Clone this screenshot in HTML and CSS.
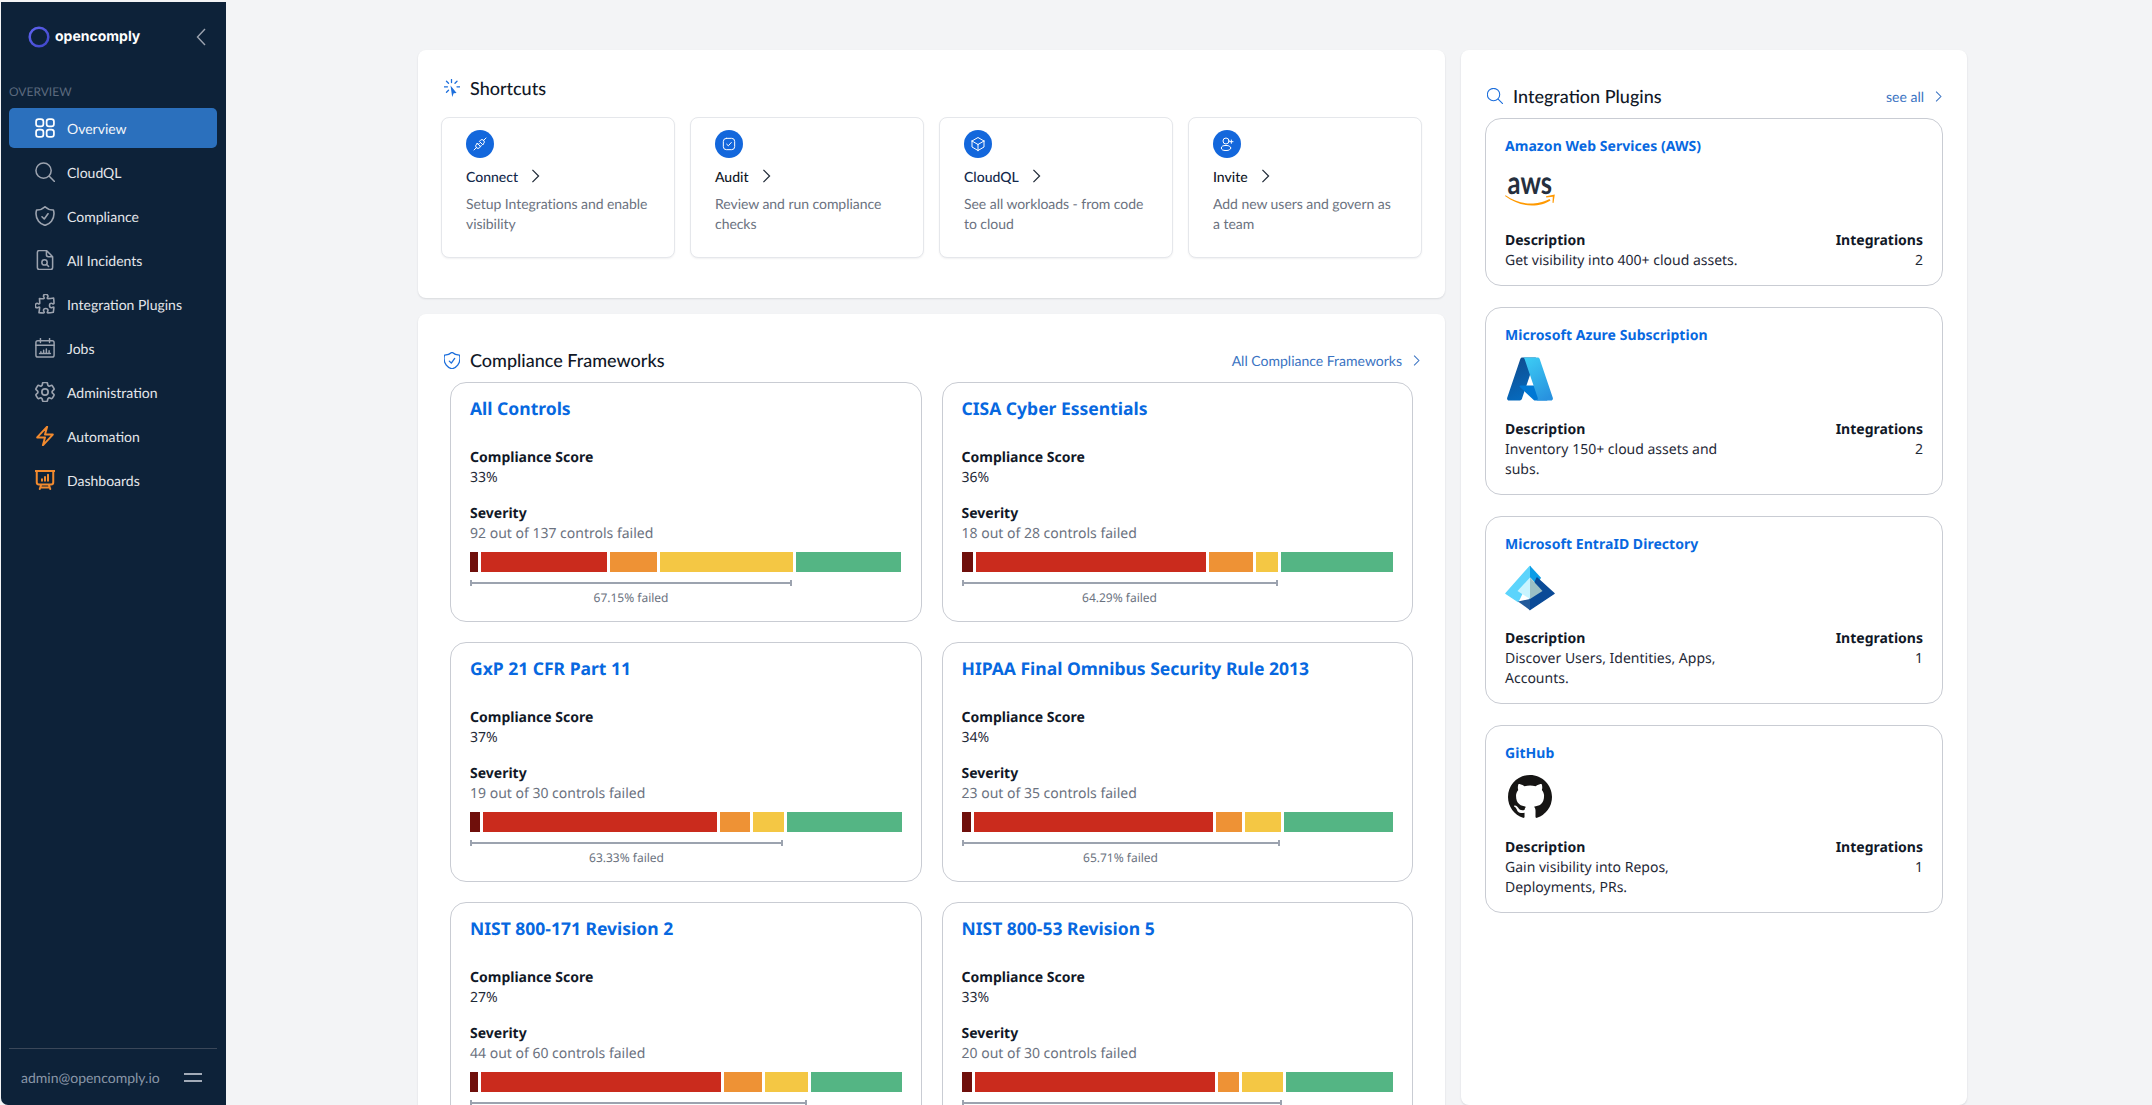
FILE: index.html
```html
<!DOCTYPE html>
<html lang="en">
<head>
<meta charset="utf-8">
<title>OpenComply Overview</title>
<link rel="stylesheet" href="styles.css">
</head>
<body>
<div class="app">
  <aside class="sidebar">
    <div class="brand">
      <svg class="brand-ring" viewBox="0 0 22 22"><defs><linearGradient id="ring" x1="0" y1="0" x2="1" y2="1"><stop offset="0" stop-color="#5f63f0"/><stop offset="1" stop-color="#3f46c8"/></linearGradient></defs><circle cx="11" cy="11" r="9.300" fill="none" stroke="url(#ring)" stroke-width="2.500"/></svg>
      <span class="brand-name">opencomply</span>
      <svg class="brand-toggle" viewBox="0 0 10 18"><path d="M9 1 1.500 9 9 17" fill="none" stroke="#9ca3af" stroke-width="1.400"/></svg>
    </div>
    <div class="nav-label">OVERVIEW</div>
    <nav class="nav">
      <a class="nav-item active"><svg class="nav-icon" viewBox="2.750 2.750 18.500 18.500"><path d="M3.750 6A2.250 2.250 0 016 3.750h2.250A2.250 2.250 0 0110.500 6v2.250a2.250 2.250 0 01-2.250 2.250H6a2.250 2.250 0 01-2.250-2.250V6zM3.750 15.750A2.250 2.250 0 016 13.500h2.250a2.250 2.250 0 012.250 2.250V18a2.250 2.250 0 01-2.250 2.250H6A2.250 2.250 0 013.750 18v-2.250zM13.500 6a2.250 2.250 0 012.250-2.250H18A2.250 2.250 0 0120.250 6v2.250A2.250 2.250 0 0118 10.500h-2.250a2.250 2.250 0 01-2.250-2.250V6zM13.500 15.750a2.250 2.250 0 012.250-2.250H18a2.250 2.250 0 012.250 2.250V18A2.250 2.250 0 0118 20.250h-2.250A2.250 2.250 0 0113.500 18v-2.250z"/></svg>Overview</a>
      <a class="nav-item"><svg class="nav-icon" viewBox="1.500 1.500 21 21"><circle cx="10.500" cy="10.500" r="8"/><path d="M16.500 16.500 22 22"/></svg>CloudQL</a>
      <a class="nav-item"><svg class="nav-icon" viewBox="2 2 20 20"><path d="M9 12.750L11.250 15 15 9.750m-3-7.036A11.959 11.959 0 013.598 6 11.990 11.990 0 003 9.749c0 5.592 3.824 10.290 9 11.623 5.176-1.332 9-6.030 9-11.622 0-1.310-.210-2.571-.598-3.751h-.152c-3.196 0-6.100-1.248-8.250-3.285z"/></svg>Compliance</a>
      <a class="nav-item"><svg class="nav-icon" viewBox="1.500 1.500 21 21"><path d="M13.500 2H6a2 2 0 00-2 2v16a2 2 0 002 2h12a2 2 0 002-2V8.500zM13.500 2v4.500a2 2 0 002 2H20"/><circle cx="11.500" cy="14.500" r="2.800"/><path d="M13.600 16.600 15.800 18.800"/></svg>All Incidents</a>
      <a class="nav-item"><svg class="nav-icon" viewBox="2 2 20 20"><path d="M14.250 6.087c0-.355.186-.676.401-.959.221-.29.349-.634.349-1.003 0-1.036-1.007-1.875-2.250-1.875s-2.250.84-2.250 1.875c0 .369.128.713.349 1.003.215.283.401.604.401.959v0a.64.64 0 01-.657.643 48.390 48.390 0 01-4.163-.3c.186 1.613.293 3.250.315 4.907a.656.656 0 01-.658.663v0c-.355 0-.676-.186-.959-.401a1.647 1.647 0 00-1.003-.349c-1.036 0-1.875 1.007-1.875 2.250s.84 2.250 1.875 2.250c.369 0 .713-.128 1.003-.349.283-.215.604-.401.959-.401v0c.31 0 .555.26.532.57a48.039 48.039 0 01-.642 5.056c1.518.19 3.058.309 4.616.354a.64.64 0 00.657-.643v0c0-.355-.186-.676-.401-.959a1.647 1.647 0 01-.349-1.003c0-1.035 1.008-1.875 2.250-1.875 1.243 0 2.250.84 2.250 1.875 0 .369-.128.713-.349 1.003-.215.283-.4.604-.4.959v0c0 .333.277.599.61.58a48.100 48.100 0 005.427-.63 48.050 48.050 0 00.582-4.717.532.532 0 00-.533-.57v0c-.355 0-.676.186-.959.401-.29.221-.634.349-1.003.349-1.035 0-1.875-1.007-1.875-2.250s.84-2.250 1.875-2.250c.37 0 .713.128 1.003.349.283.215.604.401.96.401v0a.656.656 0 00.658-.663 48.422 48.422 0 00-.37-5.360c-1.886.342-3.810.574-5.766.689a.578.578 0 01-.61-.58v0z"/></svg>Integration Plugins</a>
      <a class="nav-item"><svg class="nav-icon" viewBox="1 1 22 22"><rect x="2" y="4" width="20" height="18" rx="2"/><path d="M2 9h20M7 1.500V6M17 1.500V6M6 18h12M7.500 16v2M10.500 14.500V18M13.500 13v5M16.500 15v3"/></svg>Jobs</a>
      <a class="nav-item"><svg class="nav-icon" viewBox="2.500 2.500 19 19"><path d="M9.594 3.940c.09-.542.56-.94 1.110-.94h2.593c.55 0 1.020.398 1.110.94l.213 1.281c.063.374.313.686.645.87.074.04.147.083.22.127.324.196.72.257 1.075.124l1.217-.456a1.125 1.125 0 011.370.49l1.296 2.247a1.125 1.125 0 01-.26 1.431l-1.003.827c-.293.24-.438.613-.431.992a6.759 6.759 0 010 .255c-.007.378.138.75.43.99l1.005.828c.424.35.534.954.26 1.430l-1.298 2.247a1.125 1.125 0 01-1.369.491l-1.217-.456c-.355-.133-.75-.072-1.076.124a6.570 6.570 0 01-.22.128c-.331.183-.581.495-.644.869l-.213 1.280c-.09.543-.56.941-1.110.941h-2.594c-.55 0-1.020-.398-1.110-.94l-.213-1.281c-.062-.374-.312-.686-.644-.87a6.520 6.520 0 01-.22-.127c-.325-.196-.72-.257-1.076-.124l-1.217.456a1.125 1.125 0 01-1.369-.49l-1.297-2.247a1.125 1.125 0 01.26-1.431l1.004-.827c.292-.24.437-.613.43-.992a6.932 6.932 0 010-.255c.007-.378-.138-.75-.43-.99l-1.004-.828a1.125 1.125 0 01-.26-1.430l1.297-2.247a1.125 1.125 0 011.370-.491l1.216.456c.356.133.751.072 1.076-.124.072-.044.146-.087.22-.128.332-.183.582-.495.644-.869l.214-1.281z"/><path d="M15 12a3 3 0 11-6 0 3 3 0 016 0z"/></svg>Administration</a>
      <a class="nav-item"><svg class="nav-icon orange" viewBox="2.500 1.500 19 21"><path d="M3.750 13.500l10.500-11.250L12 10.500h8.250L9.750 21.750 12 13.500H3.750z"/></svg>Automation</a>
      <a class="nav-item"><svg class="nav-icon orange" viewBox="2 2 20 20"><path d="M3.750 3v11.250A2.250 2.250 0 006 16.500h2.250M3.750 3h-1.500m1.500 0h16.500m0 0h1.500m-1.500 0v11.250A2.250 2.250 0 0118 16.500h-2.250m-7.500 0h7.500m-7.500 0l-1 3m8.500-3l1 3m0 0l.5 1.500m-.5-1.500h-9.500m0 0l-.5 1.500M9 11.250v1.500M12 9v3.750m3-6v6"/></svg>Dashboards</a>
    </nav>
    <div class="side-foot">
      <span class="side-user">admin@opencomply.io</span>
      <span class="side-menu"></span>
    </div>
  </aside>

  <main class="main">
    <div class="col-left">
      <section class="panel shortcuts">
        <header class="panel-head">
          <div class="panel-title">
            <svg class="title-icon tall" viewBox="0 0 16 18"><path class="solid" d="M6.500 6.500 8.200 18l1.500-3.700 2.900-.4z"/><path d="M7.500.5v3M2.500 2.200l2 2M13 2.200l-2 2M.5 7.800h3M13 7.800h2.500M2.500 13.300l2-2"/></svg>
            <h2>Shortcuts</h2>
          </div>
        </header>
        <div class="shortcut-row">
          <article class="shortcut">
            <span class="shortcut-badge"><svg viewBox="0 0 24 24"><path d="M3 21l4-4M21 3l-4 4M9 13l2-2M12 16l2-2"/><path d="M8 11l5 5-1.500 1.500a3.500 3.500 0 01-5-5zM16 13l-5-5 1.500-1.500a3.500 3.500 0 015 5z"/></svg></span>
            <div class="shortcut-name navy">Connect<svg class="chev" viewBox="0 0 10 16"><path d="M1.500 1l7 7-7 7"/></svg></div>
            <p>Setup Integrations and enable visibility</p>
          </article>
          <article class="shortcut">
            <span class="shortcut-badge"><svg viewBox="0 0 24 24"><rect x="3.500" y="3.500" width="17" height="17" rx="4.500"/><path d="M8.500 12.300l2.500 2.400 4.500-5"/></svg></span>
            <div class="shortcut-name">Audit<svg class="chev" viewBox="0 0 10 16"><path d="M1.500 1l7 7-7 7"/></svg></div>
            <p>Review and run compliance checks</p>
          </article>
          <article class="shortcut">
            <span class="shortcut-badge"><svg viewBox="0 0 24 24"><path d="M21 7.500l-9-5.250L3 7.500m18 0l-9 5.250m9-5.250v9l-9 5.250M3 7.500l9 5.250M3 7.500v9l9 5.250m0-9v9"/></svg></span>
            <div class="shortcut-name navy">CloudQL<svg class="chev" viewBox="0 0 10 16"><path d="M1.500 1l7 7-7 7"/></svg></div>
            <p>See all workloads - from code to cloud</p>
          </article>
          <article class="shortcut">
            <span class="shortcut-badge"><svg viewBox="0 0 24 24"><circle cx="10.500" cy="7.500" r="4.500"/><ellipse cx="10.500" cy="18" rx="7" ry="3.800"/><path d="M18.500 6v5M16 8.500h5"/></svg></span>
            <div class="shortcut-name">Invite<svg class="chev" viewBox="0 0 10 16"><path d="M1.500 1l7 7-7 7"/></svg></div>
            <p>Add new users and govern as a team</p>
          </article>
        </div>
      </section>

      <section class="panel frameworks">
        <header class="panel-head">
          <div class="panel-title">
            <svg class="title-icon shield" viewBox="3 2.700 18 18.700"><path d="M9 12.750L11.250 15 15 9.750m-3-7.036A11.959 11.959 0 013.598 6 11.990 11.990 0 003 9.749c0 5.592 3.824 10.290 9 11.623 5.176-1.332 9-6.030 9-11.622 0-1.310-.210-2.571-.598-3.751h-.152c-3.196 0-6.100-1.248-8.250-3.285z"/></svg>
            <h2>Compliance Frameworks</h2>
          </div>
          <a class="head-link">All Compliance Frameworks<svg class="chev-sm" viewBox="0 0 10 16"><path d="M1.500 1l7 7-7 7"/></svg></a>
        </header>
        <div class="fw-grid">
          <article class="fw-card">
            <h3>All Controls</h3>
            <div class="fw-label">Compliance Score</div><div class="fw-value">33%</div>
            <div class="fw-label fw-gap">Severity</div><div class="fw-muted">92 out of 137 controls failed</div>
            <div class="bar"><i class="s1" style="flex:8"></i><i class="s2" style="flex:126"></i><i class="s3" style="flex:47"></i><i class="s4" style="flex:133"></i><i class="s5" style="flex:106"></i></div>
            <div class="failed" style="width:322px"><span class="bracket"></span><span class="failed-text">67.15% failed</span></div>
          </article>
          <article class="fw-card">
            <h3>CISA Cyber Essentials</h3>
            <div class="fw-label">Compliance Score</div><div class="fw-value">36%</div>
            <div class="fw-label fw-gap">Severity</div><div class="fw-muted">18 out of 28 controls failed</div>
            <div class="bar"><i class="s1" style="flex:11"></i><i class="s2" style="flex:230"></i><i class="s3" style="flex:44"></i><i class="s4" style="flex:22"></i><i class="s5" style="flex:112"></i></div>
            <div class="failed" style="width:316px"><span class="bracket"></span><span class="failed-text">64.29% failed</span></div>
          </article>
          <article class="fw-card">
            <h3>GxP 21 CFR Part 11</h3>
            <div class="fw-label">Compliance Score</div><div class="fw-value">37%</div>
            <div class="fw-label fw-gap">Severity</div><div class="fw-muted">19 out of 30 controls failed</div>
            <div class="bar"><i class="s1" style="flex:10"></i><i class="s2" style="flex:234"></i><i class="s3" style="flex:30"></i><i class="s4" style="flex:31"></i><i class="s5" style="flex:115"></i></div>
            <div class="failed" style="width:313px"><span class="bracket"></span><span class="failed-text">63.33% failed</span></div>
          </article>
          <article class="fw-card">
            <h3>HIPAA Final Omnibus Security Rule 2013</h3>
            <div class="fw-label">Compliance Score</div><div class="fw-value">34%</div>
            <div class="fw-label fw-gap">Severity</div><div class="fw-muted">23 out of 35 controls failed</div>
            <div class="bar"><i class="s1" style="flex:9"></i><i class="s2" style="flex:239"></i><i class="s3" style="flex:26"></i><i class="s4" style="flex:36"></i><i class="s5" style="flex:109"></i></div>
            <div class="failed" style="width:318px"><span class="bracket"></span><span class="failed-text">65.71% failed</span></div>
          </article>
          <article class="fw-card">
            <h3>NIST 800-171 Revision 2</h3>
            <div class="fw-label">Compliance Score</div><div class="fw-value">27%</div>
            <div class="fw-label fw-gap">Severity</div><div class="fw-muted">44 out of 60 controls failed</div>
            <div class="bar"><i class="s1" style="flex:8"></i><i class="s2" style="flex:240"></i><i class="s3" style="flex:38"></i><i class="s4" style="flex:43"></i><i class="s5" style="flex:91"></i></div>
            <div class="failed" style="width:337px"><span class="bracket"></span></div>
          </article>
          <article class="fw-card">
            <h3>NIST 800-53 Revision 5</h3>
            <div class="fw-label">Compliance Score</div><div class="fw-value">33%</div>
            <div class="fw-label fw-gap">Severity</div><div class="fw-muted">20 out of 30 controls failed</div>
            <div class="bar"><i class="s1" style="flex:10"></i><i class="s2" style="flex:240"></i><i class="s3" style="flex:21"></i><i class="s4" style="flex:41"></i><i class="s5" style="flex:107"></i></div>
            <div class="failed" style="width:320px"><span class="bracket"></span></div>
          </article>
        </div>
      </section>
    </div>

    <section class="panel plugins">
      <header class="panel-head">
        <div class="panel-title">
          <svg class="title-icon search" viewBox="1.500 1.500 22 22"><circle cx="10.500" cy="10.500" r="8.500"/><path d="M16.800 16.800 23 23"/></svg>
          <h2>Integration Plugins</h2>
        </div>
        <a class="head-link">see all<svg class="chev-sm" viewBox="0 0 10 16"><path d="M1.500 1l7 7-7 7"/></svg></a>
      </header>
      <div class="plugin-list">
        <article class="plugin">
          <h3>Amazon Web Services (AWS)</h3>
          <div class="plugin-logo aws">
            <span class="aws-word">aws</span>
            <svg class="aws-smile" viewBox="0 0 50 14"><path fill="#f90" d="M0 2C9 8.500 18 11.500 27 11.500 34 11.500 41 9.500 45.500 6.500L44.500 5C37 8.500 32 9.500 26 9.500 17 9.500 8 6.500.6 1.200z"/><path fill="#f90" d="M41 2.200 49.800.500 48.500 9 47.500 8.800 47.800 2.800 41.200 3.400z"/></svg>
          </div>
          <div class="plugin-meta">
            <div class="plugin-desc"><b>Description</b><span>Get visibility into 400+ cloud assets.</span></div>
            <div class="plugin-count"><b>Integrations</b><span>2</span></div>
          </div>
        </article>
        <article class="plugin">
          <h3>Microsoft Azure Subscription</h3>
          <div class="plugin-logo">
            <svg viewBox="0 0 96 96"><defs><linearGradient id="az1" x1="0" y1="0" x2="0.300" y2="1"><stop offset="0" stop-color="#114a8b"/><stop offset="1" stop-color="#0669bc"/></linearGradient><linearGradient id="az2" x1="0.200" y1="0" x2="0.700" y2="1"><stop offset="0" stop-color="#3ccbf4"/><stop offset="1" stop-color="#2892df"/></linearGradient></defs><path fill="url(#az1)" d="M33.340 6.540h26.040L32.360 86.620a4.150 4.150 0 0 1-3.940 2.830H8.150a4.150 4.150 0 0 1-3.930-5.480L29.400 9.370a4.150 4.150 0 0 1 3.940-2.830z"/><path fill="#0078d4" d="M71.170 60.260H29.880a1.910 1.910 0 0 0-1.300 3.310l26.530 24.760a4.170 4.170 0 0 0 2.850 1.120h23.380z"/><path fill="url(#az2)" d="M66.600 9.360a4.150 4.150 0 0 0-3.930-2.820H33.650a4.150 4.150 0 0 1 3.930 2.820l25.180 74.620a4.150 4.150 0 0 1-3.930 5.480h29.020a4.150 4.150 0 0 0 3.930-5.480z"/></svg>
          </div>
          <div class="plugin-meta">
            <div class="plugin-desc"><b>Description</b><span>Inventory 150+ cloud assets and subs.</span></div>
            <div class="plugin-count"><b>Integrations</b><span>2</span></div>
          </div>
        </article>
        <article class="plugin">
          <h3>Microsoft EntraID Directory</h3>
          <div class="plugin-logo">
            <svg viewBox="0 0 50 50"><path fill="#5cd4fc" stroke="#5cd4fc" stroke-width="1.500" stroke-linejoin="round" d="M25 3.500 1 30.500 13 38.500 25 14z"/><path fill="#0b9ce6" d="M25 2.700v11.500l7 7.500 4-7z"/><path fill="#0a4a97" stroke="#0a4a97" stroke-width="1.500" stroke-linejoin="round" d="M32 15 49 30.500 25 46.500V32z"/><path fill="#225a9a" d="M13 38.500 25 47.200V36z"/><path fill="#c8f4ff" d="M25 14.500 12.500 28 25 36z"/><path fill="#9cbfc4" d="M25 14.500 37.500 28 25 36z"/></svg>
          </div>
          <div class="plugin-meta">
            <div class="plugin-desc"><b>Description</b><span>Discover Users, Identities, Apps, Accounts.</span></div>
            <div class="plugin-count"><b>Integrations</b><span>1</span></div>
          </div>
        </article>
        <article class="plugin">
          <h3>GitHub</h3>
          <div class="plugin-logo">
            <svg class="gh" viewBox="0 0 16 16"><path fill="#161514" d="M8 0C3.580 0 0 3.580 0 8c0 3.540 2.290 6.530 5.470 7.590.400.070.550-.170.550-.380 0-.190-.010-.820-.010-1.490-2.010.370-2.530-.490-2.690-.940-.090-.230-.480-.940-.820-1.130-.280-.150-.680-.520-.010-.530.630-.010 1.080.580 1.230.820.720 1.210 1.870.870 2.330.660.070-.520.280-.870.510-1.070-1.780-.200-3.640-.890-3.640-3.950 0-.870.310-1.590.82-2.150-.080-.200-.360-1.020.080-2.120 0 0 .670-.210 2.200.820.640-.180 1.320-.270 2-.270.680 0 1.360.090 2 .270 1.530-1.040 2.200-.820 2.200-.820.440 1.100.160 1.920.08 2.120.510.560.820 1.270.820 2.150 0 3.070-1.870 3.750-3.650 3.950.290.250.540.730.540 1.480 0 1.070-.010 1.930-.010 2.200 0 .210.150.460.550.380A8.013 8.013 0 0016 8c0-4.420-3.580-8-8-8z"/></svg>
          </div>
          <div class="plugin-meta">
            <div class="plugin-desc"><b>Description</b><span>Gain visibility into Repos, Deployments, PRs.</span></div>
            <div class="plugin-count"><b>Integrations</b><span>1</span></div>
          </div>
        </article>
      </div>
    </section>
  </main>
</div>
</body>
</html>
```
FILE: styles.css
```css
* { box-sizing: border-box; }
html, body { margin: 0; height: 100%; }
body { background: #f3f4f6; font-family: "Lato", sans-serif; overflow: hidden; text-rendering: geometricPrecision; }
h2, h3, p { margin: 0; }

.app { display: flex; height: 100vh; padding: 2px 0 0 1px; }

/* sidebar */
.sidebar { width: 225px; flex: none; display: flex; flex-direction: column; background: #0d2239; padding: 0 9px 0 8px; border-bottom-left-radius: 7px; }
.brand { height: 70px; display: flex; align-items: center; padding-left: 19px; margin-bottom: 12px; }
.brand-ring { width: 22px; height: 22px; flex: none; }
.brand-name { margin-left: 5px; color: #fff; font: 700 14px/20px "Inter", sans-serif; }
.brand-toggle { width: 10px; height: 18px; margin-left: auto; margin-right: 11px; }
.nav-label { color: #5c6a7e; font-size: 12px; line-height: 16px; margin-bottom: 8px; }
.nav { display: flex; flex-direction: column; gap: 4px; }
.nav-item { height: 40px; display: flex; align-items: center; gap: 12px; padding-left: 26px; color: #e5e7eb; font-size: 14px; border-radius: 5px; }
.nav-item.active { background: #2b70bd; color: #f3f6fa; }
.nav-icon { width: 20px; height: 20px; flex: none; fill: none; stroke: #9ca3af; stroke-width: 1.600; stroke-linecap: round; stroke-linejoin: round; }
.active .nav-icon { stroke: #fff; }
.nav-icon.orange { stroke: #f28a2e; stroke-width: 2; }
.side-foot { margin-top: auto; height: 57px; flex: none; border-top: 1px solid #3a4759; display: flex; align-items: center; justify-content: space-between; padding: 0 15px 0 12px; }
.side-user { color: #8a97a8; font-size: 14px; }
.side-menu { width: 18px; height: 9px; border-top: 2px solid #a2abb8; border-bottom: 2px solid #a2abb8; }

/* main */
.main { flex: 1; display: flex; gap: 16px; padding: 48px 185px 0 192px; min-width: 0; overflow: hidden; }
.col-left { width: 1027px; flex: none; display: flex; flex-direction: column; gap: 16px; }
.panel { background: #fff; border-radius: 8px; box-shadow: 0 1px 2px rgba(17, 24, 39, .12); }
.panel-head { display: flex; align-items: center; justify-content: space-between; height: 28px; }
.panel-title { display: flex; align-items: center; gap: 10px; }
.panel-title h2 { color: #111827; font-size: 18px; font-weight: 500; line-height: 28px; }
.title-icon { width: 16px; height: 16px; flex: none; fill: none; stroke: #1d6fdc; stroke-width: 1.500; stroke-linecap: round; stroke-linejoin: round; }
.title-icon.tall { height: 18px; stroke-width: 1.300; }
.title-icon.shield { height: 17px; }
.title-icon .solid { fill: #1d6fdc; stroke: none; }
.head-link { display: flex; align-items: center; gap: 11px; color: #3a73c2; font-size: 14px; }
.chev-sm { width: 7px; height: 11px; fill: none; stroke: #3a73c2; stroke-width: 1.500; }

/* shortcuts */
.shortcuts { padding: 24px 23px 40px; }
.shortcuts .panel-head { padding-left: 3px; margin-bottom: 15px; }
.shortcut-row { display: grid; grid-template-columns: repeat(4, 1fr); gap: 15px; }
.shortcut { height: 141px; padding: 12px 24px 0; background: #fff; border: 1px solid #e5e7eb; border-radius: 8px; box-shadow: 0 1px 2px rgba(17, 24, 39, .06); }
.shortcut-badge { width: 28px; height: 28px; border-radius: 50%; background: #1367dc; display: flex; align-items: center; justify-content: center; }
.shortcut-badge svg { width: 16px; height: 16px; fill: none; stroke: #fff; stroke-width: 1.500; stroke-linecap: round; stroke-linejoin: round; }
.shortcut-name { margin-top: 8px; display: flex; align-items: center; gap: 13px; height: 20px; color: #111827; font-size: 14px; font-weight: 500; }
.shortcut-name.navy { color: #13294b; }
.chev { width: 9px; height: 14px; fill: none; stroke: #1f2937; stroke-width: 1.400; }
.shortcut p { margin-top: 8px; color: #6b7280; font-size: 14px; line-height: 20px; letter-spacing: -.05px; }

/* frameworks */
.frameworks { flex: 1; padding: 32px 25px 0; }
.frameworks .panel-head { margin-bottom: 8px; padding-left: 1px; }
.fw-grid { display: grid; grid-template-columns: 1fr 1fr; gap: 20px; margin: 0 7px; }
.fw-card { height: 240px; padding: 14px 19px; border: 1px solid #c9ccd3; border-radius: 16px; font-family: "Noto Sans", sans-serif; }
.fw-card h3 { color: #0768e0; font-size: 17.500px; font-weight: 700; line-height: 24px; margin-bottom: 27px; }
.fw-label { color: #111827; font-size: 14px; font-weight: 700; line-height: 20px; }
.fw-gap { margin-top: 16px; }
.fw-value { color: #1f2937; font-size: 14px; line-height: 20px; }
.fw-muted { color: #6b7280; font-size: 14px; line-height: 20px; }
.bar { display: flex; gap: 3px; height: 20px; margin-top: 8px; }
.bar i { display: block; }
.s1 { background: #6f0f0b; }
.s2 { background: #ca2b1d; }
.s3 { background: #ee9235; }
.s4 { background: #f4c744; }
.s5 { background: #54b584; }
.failed { margin-top: 8px; display: flex; flex-direction: column; align-items: center; gap: 4px; }
.bracket { width: 100%; height: 6px; border-left: 2px solid #9ca3af; border-right: 2px solid #9ca3af; background: linear-gradient(#9ca3af, #9ca3af) center / 100% 2px no-repeat; }
.failed-text { color: #6b7280; font-size: 12px; line-height: 16px; }

/* plugins */
.plugins { width: 506px; flex: none; padding: 32px 24px 0; }
.plugins .panel-head { margin-bottom: 8px; padding: 0 1px 0 2px; }
.plugin-list { display: flex; flex-direction: column; gap: 21px; }
.plugin { padding: 18px 19px 14px; border: 1px solid #c9ccd3; border-radius: 16px; font-family: "Noto Sans", sans-serif; }
.plugin h3 { color: #0768e0; font-size: 14px; font-weight: 700; line-height: 20px; margin-bottom: 8px; letter-spacing: .05px; }
.plugin-logo { width: 50px; height: 50px; margin-bottom: 16px; display: flex; align-items: center; justify-content: center; }
.plugin-logo svg { width: 50px; height: 50px; display: block; }
.plugin-logo svg.gh { width: 44px; height: 44px; }
.plugin-logo.aws { flex-direction: column; justify-content: flex-start; padding-top: 5px; }
.aws-word { display: block; height: 24px; color: #252f3e; font: 700 32px/24px "Lato", sans-serif; transform: scaleX(.8); }
.plugin-logo svg.aws-smile { width: 50px; height: 14px; flex: none; }
.plugin-meta { display: flex; justify-content: space-between; font-size: 14px; line-height: 20px; color: #1f2937; }
.plugin-meta b { display: block; color: #111827; font-weight: 700; }
.plugin-meta span { display: block; }
.plugin-desc { width: 235px; }
.plugin-count { text-align: right; }
```
